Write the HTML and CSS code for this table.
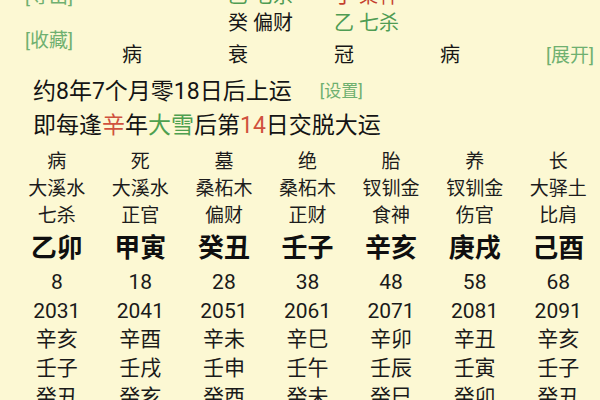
FILE: index.html
```html
<!DOCTYPE html>
<html lang="zh">
<head>
<meta charset="utf-8">
<title>大运</title>
<link rel="stylesheet" href="styles.css">
</head>
<body>
<div class="page">
  <div class="top">
    <div class="side">
      <span class="link">[导出]</span>
      <span class="link">[收藏]</span>
    </div>
    <span class="cell"></span>
    <span class="cell green">乙 七杀</span>
    <span class="cell red">丁 枭神</span>
    <span class="cell"></span>
    <span class="cell"></span>
    <span class="cell"></span>
    <span class="cell dark">癸 偏财</span>
    <span class="cell green">乙 七杀</span>
    <span class="cell"></span>
    <span class="cell"></span>
    <span class="cell dark stage">病</span>
    <span class="cell dark stage">衰</span>
    <span class="cell dark stage">冠</span>
    <span class="cell dark stage">病</span>
    <span class="cell stage more"><span class="link">[展开]</span></span>
  </div>

  <p class="line">约8年7个月零18日后上运<span class="link set">[设置]</span></p>
  <p class="line">即每逢<span class="hl-red">辛</span>年<span class="hl-green">大雪</span>后第<span class="hl-red">14</span>日交脱大运</p>

  <div class="grid">
    <div class="row small"><span>病</span><span>死</span><span>墓</span><span>绝</span><span>胎</span><span>养</span><span>长</span></div>
    <div class="row small"><span>大溪水</span><span>大溪水</span><span>桑柘木</span><span>桑柘木</span><span>钗钏金</span><span>钗钏金</span><span>大驿土</span></div>
    <div class="row small"><span>七杀</span><span>正官</span><span>偏财</span><span>正财</span><span>食神</span><span>伤官</span><span>比肩</span></div>
    <div class="row big"><span>乙卯</span><span>甲寅</span><span>癸丑</span><span>壬子</span><span>辛亥</span><span>庚戌</span><span>己酉</span></div>
    <div class="row num"><span>8</span><span>18</span><span>28</span><span>38</span><span>48</span><span>58</span><span>68</span></div>
    <div class="row num r-year"><span>2031</span><span>2041</span><span>2051</span><span>2061</span><span>2071</span><span>2081</span><span>2091</span></div>
    <div class="row num"><span>辛亥</span><span>辛酉</span><span>辛未</span><span>辛巳</span><span>辛卯</span><span>辛丑</span><span>辛亥</span></div>
    <div class="row num"><span>壬子</span><span>壬戌</span><span>壬申</span><span>壬午</span><span>壬辰</span><span>壬寅</span><span>壬子</span></div>
    <div class="row num"><span>癸丑</span><span>癸亥</span><span>癸酉</span><span>癸未</span><span>癸巳</span><span>癸卯</span><span>癸丑</span></div>
  </div>
</div>
</body>
</html>
```

FILE: styles.css
```css
html, body {
  margin: 0;
  padding: 0;
  background: #fcf8d3;
}

body {
  width: 600px;
  height: 400px;
  overflow: hidden;
  font-family: Roboto, "Noto Sans CJK SC", sans-serif;
  color: #161616;
}

.page {
  background: #fcf8d3;
}

.top {
  display: grid;
  grid-template-columns: 122px repeat(4, 106px) 1fr;
  grid-template-rows: 27px 27px 37px;
  margin-top: -17px;
  font-size: 20px;
  line-height: 27px;
}

.side {
  grid-row: 1 / 4;
  grid-column: 1;
  display: flex;
  flex-direction: column;
  gap: 17px;
  padding-left: 25px;
  font-size: 19px;
}

.cell {
  white-space: nowrap;
}

.stage {
  padding-top: 5px;
}

.more {
  text-align: right;
  padding-right: 10px;
  font-size: 19px;
}

.link {
  color: #6fb070;
}

.green {
  color: #4f9c53;
}

.red {
  color: #c4402e;
}

.dark {
  color: #161616;
}

.line {
  margin: 0;
  padding-left: 33px;
  font-size: 23px;
  line-height: 34px;
  color: #141414;
  white-space: nowrap;
}

.set {
  font-size: 17px;
  margin-left: 28px;
  vertical-align: 2px;
}

.hl-red {
  color: #d0513d;
}

.hl-green {
  color: #4ea04f;
}

.grid {
  margin-top: 5px;
  padding-left: 15px;
}

.row {
  display: grid;
  grid-template-columns: repeat(7, 1fr);
  text-align: center;
  white-space: nowrap;
}

.small {
  font-size: 19px;
  height: 27px;
  line-height: 27px;
  color: #1c1c1c;
}

.big {
  font-size: 26px;
  font-weight: bold;
  height: 39px;
  line-height: 39px;
  color: #0f0f0f;
}

.num {
  font-size: 21px;
  height: 29px;
  line-height: 29px;
  color: #1a1a1a;
}

.r-year {
  height: 28px;
  line-height: 28px;
}
```
